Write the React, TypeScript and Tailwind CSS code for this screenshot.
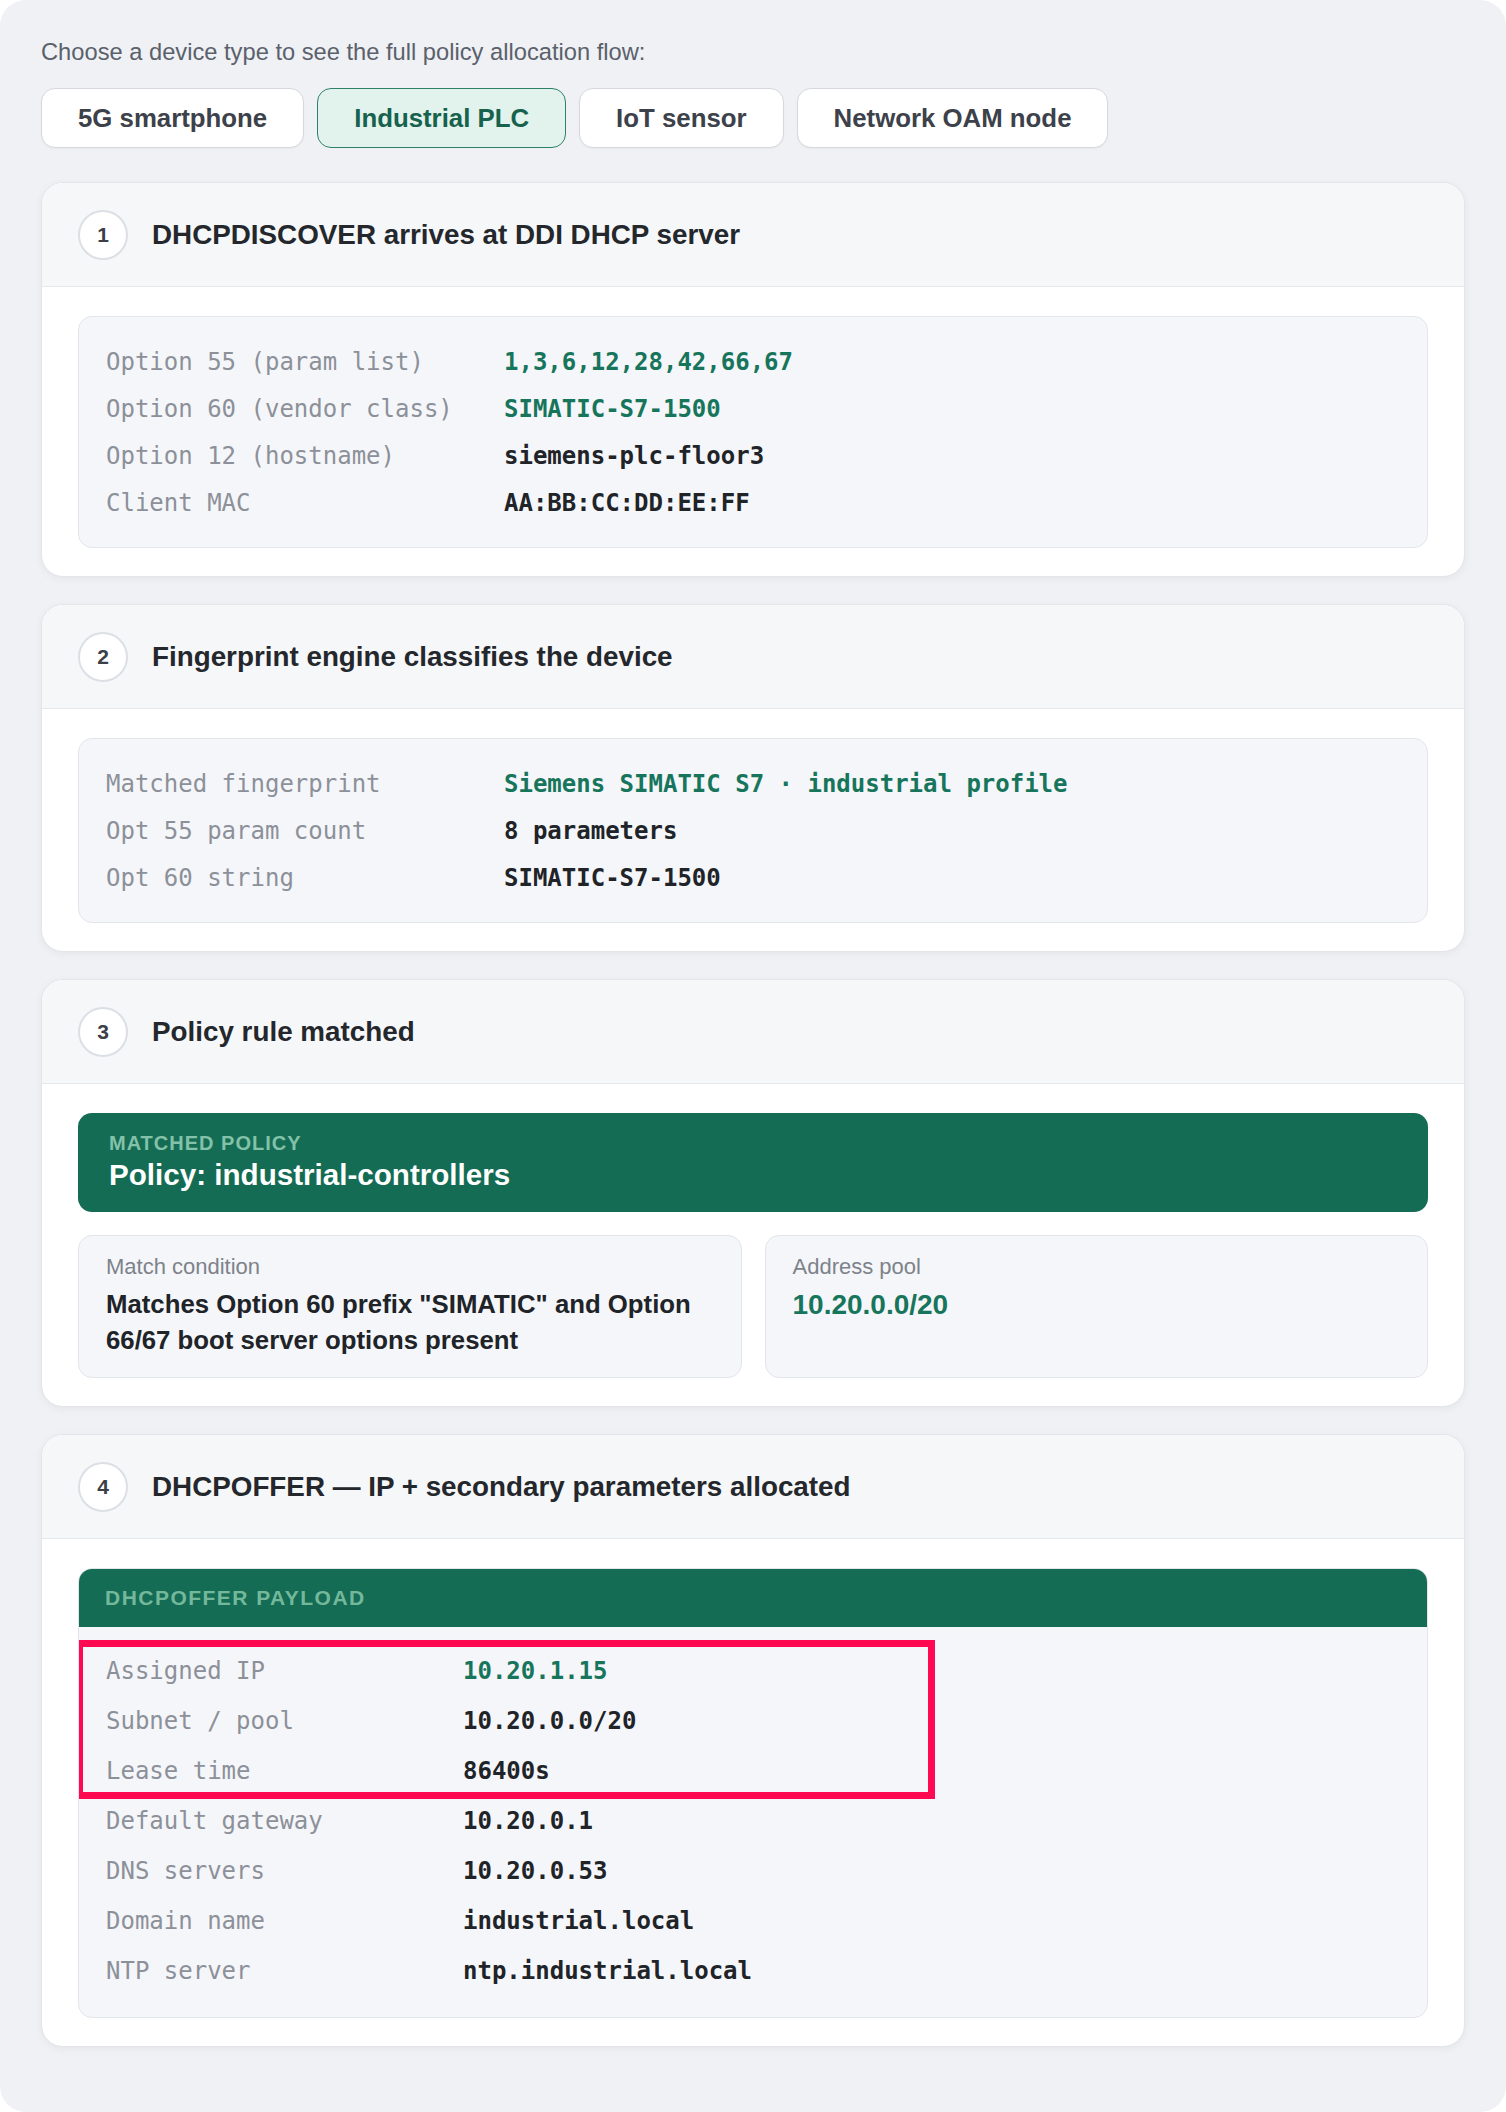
import type { ReactNode } from 'react'

type Row = { label: string; value: string; accent?: boolean }

const devices = ['5G smartphone', 'Industrial PLC', 'IoT sensor', 'Network OAM node']

const discoverRows: Row[] = [
  { label: 'Option 55 (param list)', value: '1,3,6,12,28,42,66,67', accent: true },
  { label: 'Option 60 (vendor class)', value: 'SIMATIC-S7-1500', accent: true },
  { label: 'Option 12 (hostname)', value: 'siemens-plc-floor3' },
  { label: 'Client MAC', value: 'AA:BB:CC:DD:EE:FF' },
]

const fingerprintRows: Row[] = [
  { label: 'Matched fingerprint', value: 'Siemens SIMATIC S7 · industrial profile', accent: true },
  { label: 'Opt 55 param count', value: '8 parameters' },
  { label: 'Opt 60 string', value: 'SIMATIC-S7-1500' },
]

const offerRows: Row[] = [
  { label: 'Assigned IP', value: '10.20.1.15', accent: true },
  { label: 'Subnet / pool', value: '10.20.0.0/20' },
  { label: 'Lease time', value: '86400s' },
  { label: 'Default gateway', value: '10.20.0.1' },
  { label: 'DNS servers', value: '10.20.0.53' },
  { label: 'Domain name', value: 'industrial.local' },
  { label: 'NTP server', value: 'ntp.industrial.local' },
]

function StepCard({ n, title, children }: { n: number; title: string; children: ReactNode }) {
  return (
    <section className="overflow-hidden rounded-[22px] border border-[#e3e5e9] bg-white shadow-[0_2px_8px_rgba(15,23,42,0.05)]">
      <header className="flex h-[104px] items-center gap-6 border-b border-[#e6e8ec] bg-[#f6f7f9] px-9">
        <span className="flex h-[50px] w-[50px] shrink-0 items-center justify-center rounded-full border-2 border-[#dcdfe4] bg-white text-[21px] font-bold text-[#3b4048]">
          {n}
        </span>
        <h2 className="text-[27.8px] font-bold text-[#24272c]">{title}</h2>
      </header>
      <div className="px-9 pt-[29px] pb-[28px]">{children}</div>
    </section>
  )
}

function KvRow({ row, labelWidth, height }: { row: Row; labelWidth: string; height: string }) {
  return (
    <div className={`flex items-center text-[24px] ${height}`}>
      <span className={`shrink-0 text-[#8c9099] ${labelWidth}`}>{row.label}</span>
      <span className={`font-bold ${row.accent ? 'text-[#17755c]' : 'text-[#202328]'}`}>{row.value}</span>
    </div>
  )
}

function KvBox({ rows }: { rows: Row[] }) {
  return (
    <div className="rounded-[14px] border border-[#e2e5ea] bg-[#f5f6f9] px-[27px] py-[21px] font-['DejaVu_Sans_Mono',monospace]">
      {rows.map(r => (
        <KvRow key={r.label} row={r} labelWidth="w-[398px]" height="h-[47px]" />
      ))}
    </div>
  )
}

export default function App() {
  const active = 'Industrial PLC'

  return (
    <div className="bg-white font-['Liberation_Sans',Arial,sans-serif]">
      <div className="min-h-screen rounded-[26px] bg-[#f0f1f4] px-[41px] pt-[34px] pb-[60px]">
        <p className="text-[23.7px] leading-[36px] text-[#5a616c]">
          Choose a device type to see the full policy allocation flow:
        </p>

        {/* Device selector */}
        <div className="mt-[18px] flex gap-[13px]">
          {devices.map(d => (
            <button
              key={d}
              className={
                d === active
                  ? 'h-[60px] rounded-[14px] border-[1.5px] border-[#2f8068] bg-[#e2f3ee] px-[36px] text-[25.8px] font-bold text-[#17614d]'
                  : 'h-[60px] rounded-[14px] border border-[#d5d8dd] bg-white px-[36px] text-[25.8px] font-bold text-[#3c414a] shadow-[0_1px_2px_rgba(0,0,0,0.04)]'
              }
            >
              {d}
            </button>
          ))}
        </div>

        <div className="mt-[34px] flex flex-col gap-[27px]">
          <StepCard n={1} title="DHCPDISCOVER arrives at DDI DHCP server">
            <KvBox rows={discoverRows} />
          </StepCard>

          <StepCard n={2} title="Fingerprint engine classifies the device">
            <KvBox rows={fingerprintRows} />
          </StepCard>

          <StepCard n={3} title="Policy rule matched">
            <div className="rounded-[14px] bg-[#146c54] px-[31px] pt-[18px] pb-[19px]">
              <div className="text-[20px] font-bold uppercase leading-[24px] tracking-[0.05em] text-[#83c2a8]">
                Matched policy
              </div>
              <div className="mt-[2px] text-[29.6px] font-bold leading-[36px] text-white">
                Policy: industrial-controllers
              </div>
            </div>
            <div className="mt-[23px] grid grid-cols-2 gap-[23px]">
              <div className="rounded-[14px] border border-[#e2e5ea] bg-[#f5f6f9] px-[27px] pt-[18px] pb-[19px]">
                <div className="text-[22px] leading-[26px] text-[#7d828b]">Match condition</div>
                <div className="mt-[6px] text-[25.75px] font-bold leading-[36px] text-[#202328]">
                  Matches Option 60 prefix "SIMATIC" and Option 66/67 boot server options present
                </div>
              </div>
              <div className="rounded-[14px] border border-[#e2e5ea] bg-[#f5f6f9] px-[27px] pt-[18px] pb-[19px]">
                <div className="text-[22px] leading-[26px] text-[#7d828b]">Address pool</div>
                <div className="mt-[7px] text-[28px] font-bold leading-[36px] text-[#17755c]">10.20.0.0/20</div>
              </div>
            </div>
          </StepCard>

          <StepCard n={4} title="DHCPOFFER — IP + secondary parameters allocated">
            <div className="overflow-hidden rounded-[14px] border border-[#e2e5ea] bg-[#f5f6f9]">
              <div className="flex h-[58px] items-center bg-[#146c54] px-[26px] text-[21px] font-bold uppercase tracking-[0.07em] text-[#74b89c]">
                DHCPOFFER payload
              </div>
              <div className="px-[27px] pt-[19px] pb-[21px] font-['DejaVu_Sans_Mono',monospace]">
                <div className="relative">
                  {offerRows.slice(0, 3).map(r => (
                    <KvRow key={r.label} row={r} labelWidth="w-[357px]" height="h-[50px]" />
                  ))}
                  {/* highlight annotation */}
                  <div className="pointer-events-none absolute top-[-6px] left-[-30px] h-[159px] w-[859px] border-[7px] border-[#ff0a52]" />
                </div>
                {offerRows.slice(3).map(r => (
                  <KvRow key={r.label} row={r} labelWidth="w-[357px]" height="h-[50px]" />
                ))}
              </div>
            </div>
          </StepCard>
        </div>
      </div>
    </div>
  )
}
